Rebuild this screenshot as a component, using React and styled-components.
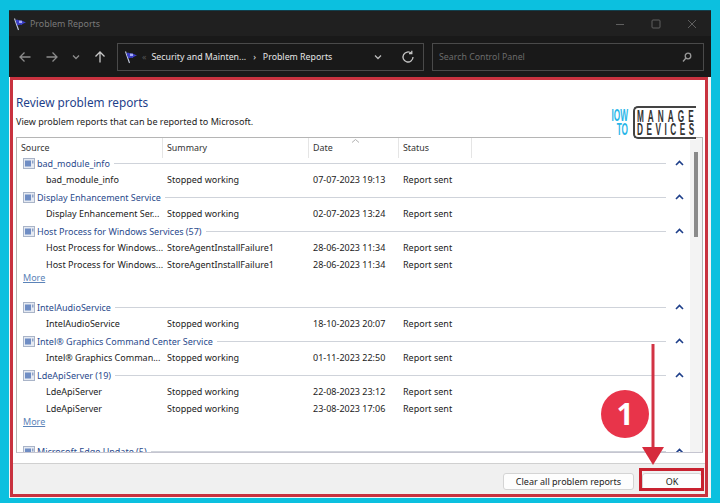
import React from 'react';
import styled, { createGlobalStyle } from 'styled-components';

const GlobalStyle = createGlobalStyle`
  html, body {
    margin: 0;
    height: 503px;
    overflow: hidden;
    background: #0cc0df;
    font-family: "Noto Sans", "Open Sans", sans-serif;
  }
`;

const Page = styled.div`
  position: relative;
  width: 720px;
  height: 503px;
  padding: 10px 0 0 9px;
  box-sizing: border-box;
`;
const Window = styled.div`
  width: 702px;
  height: 488px;
  background: #f4f4f4;
  display: flex;
  flex-direction: column;
  box-sizing: border-box;
`;
const TitleBar = styled.div`
  height: 26px;
  flex: none;
  background: #202020;
  border-top: 1px solid #123f4c;
  box-sizing: border-box;
  display: flex;
  align-items: center;
  padding-left: 4px;
  gap: 3px;
  color: #7a7a7a;
  font-size: 8.9px;
`;
const WindowButtons = styled.div`
  margin-left: auto;
  display: flex;
  align-items: center;
  gap: 22px;
  padding-right: 12px;
  svg { display: block; }
`;
const NavBar = styled.div`
  height: 41px;
  flex: none;
  background: #191919;
  display: flex;
  align-items: center;
  box-sizing: border-box;
  padding: 0 0 0 8px;
`;
const NavIcons = styled.div`
  width: 100px;
  flex: none;
  display: flex;
  align-items: center;
  gap: 11px;
  svg { display: block; }
`;
const AddressBox = styled.div`
  width: 307px;
  height: 28px;
  flex: none;
  box-sizing: border-box;
  border: 1px solid #4a4a4a;
  display: flex;
  align-items: center;
  padding: 0 7px 0 6px;
  color: #e6e6e6;
  font-size: 8.8px;
  white-space: nowrap;
  svg { display: block; flex: none; }
`;
const Crumb = styled.span`
  margin: ${(p) => p.$margin};
  color: ${(p) => p.$color || 'inherit'};
`;
const SearchBox = styled.div`
  width: 272px;
  height: 28px;
  margin-left: 8px;
  flex: none;
  box-sizing: border-box;
  border: 1px solid #4a4a4a;
  display: flex;
  align-items: center;
  justify-content: space-between;
  padding: 0 10px 0 6px;
  color: #6b6b6b;
  font-size: 8.8px;
`;
const Content = styled.div`
  flex: 1;
  min-height: 0;
  margin: 0 3px 1px 1px;
  border: 3px solid #c8323f;
  display: flex;
  flex-direction: column;
  background: #fff;
`;
const Main = styled.div`
  flex: 1;
  min-height: 0;
  display: flex;
  flex-direction: column;
  padding: 14px 2px 10px 3px;
`;
const Heading = styled.h1`
  margin: 0;
  font-size: 11.8px;
  line-height: 16px;
  font-weight: 400;
  color: #1e3f8a;
`;
const Subheading = styled.p`
  margin: 6px 0 9px;
  font-size: 9.05px;
  line-height: 12px;
  color: #222;
`;
const ListBox = styled.div`
  flex: 1;
  min-height: 0;
  border: 1px solid #b5b5b5;
  border-bottom-color: #c5c5d0;
  display: flex;
  overflow: hidden;
`;
const ListBody = styled.div`
  flex: 1;
  min-width: 0;
  overflow: hidden;
`;
const ListHeader = styled.div`
  display: grid;
  grid-template-columns: 146px 146px 90px 73px 1fr;
  height: 17px;
`;
const HeaderCell = styled.div`
  position: relative;
  font-size: 8.9px;
  line-height: 20px;
  color: #333;
  padding-left: ${(p) => p.$pad || 4}px;
  border-right: 1px solid #e5e5e5;
  &:last-child { border-right: 0; }
`;
const SortCaret = styled.svg`
  position: absolute;
  left: 42px;
  top: 1px;
`;
const Group = styled.div`
  padding-bottom: 1px;
`;
const GroupRow = styled.div`
  height: 16px;
  display: flex;
  align-items: center;
  padding: 0 6px 0 6px;
  gap: 2px;
`;
const GroupName = styled.span`
  color: #2a4a8c;
  font-size: 9px;
  white-space: nowrap;
`;
const GroupLine = styled.span`
  flex: 1;
  height: 1px;
  background: #cfd3da;
  margin-left: 2px;
`;
const Chevron = styled.svg`
  flex: none;
  margin-left: 7px;
`;
const ItemRow = styled.div`
  display: grid;
  grid-template-columns: 146px 146px 90px 1fr;
  height: ${(p) => p.$h}px;
  align-items: center;
  font-size: 9px;
  color: #222;
`;
const ItemCell = styled.span`
  padding-left: ${(p) => p.$pad || 4}px;
  white-space: nowrap;
  overflow: hidden;
`;
const MoreLink = styled.a`
  display: block;
  height: ${(p) => p.$h}px;
  padding-left: 6px;
  font-size: 9px;
  line-height: 12px;
  color: #5b83b8;
  text-decoration: underline;
`;
const Scrollbar = styled.div`
  width: 12px;
  flex: none;
  background: #f3f3f3;
  position: relative;
`;
const Thumb = styled.div`
  position: absolute;
  left: 4px;
  top: 14px;
  width: 4px;
  height: 85px;
  background: #8a8a8a;
`;
const Footer = styled.div`
  height: 31px;
  flex: none;
  background: #f0f0f0;
  border-top: 1px solid #d0d0d0;
  box-sizing: border-box;
  display: flex;
  justify-content: flex-end;
  align-items: center;
  gap: 8px;
  padding: 4px 3px 0 0;
`;
const Button = styled.div`
  width: ${(p) => p.$w}px;
  height: 17px;
  box-sizing: border-box;
  background: #fdfdfd;
  border: 1px solid #d4d4d4;
  border-radius: 3px;
  font-size: 9px;
  line-height: 15px;
  text-align: center;
  color: #222;
`;
const OkHighlight = styled.div`
  position: absolute;
  left: 639px;
  top: 468px;
  width: 65px;
  height: 23px;
  box-sizing: border-box;
  border: 3px solid #c8212f;
`;
const Badge = styled.div`
  position: absolute;
  left: 601px;
  top: 390px;
  width: 48px;
  height: 48px;
  border-radius: 50%;
  background: #e8344a;
  color: #fff;
  font-size: 30px;
  font-weight: 700;
  line-height: 48px;
  text-align: center;
  font-family: "Open Sans", sans-serif;
`;
const ArrowOverlay = styled.svg`
  position: absolute;
  left: 642px;
  top: 340px;
`;
const Logo = styled.div`
  position: absolute;
  left: 611px;
  top: 104px;
  width: 85px;
  height: 36px;
  background: #fff;
  display: flex;
  align-items: center;
  font-family: "Liberation Sans", sans-serif;
  font-weight: 700;
`;
const LogoHow = styled.div`
  width: 36px;
  margin-left: -19px;
  flex: none;
  color: #29b6e8;
  font-size: 16.5px;
  line-height: 14px;
  text-align: right;
  white-space: nowrap;
  transform: scaleX(0.5);
  transform-origin: right center;
`;
const LogoBox = styled.div`
  margin-left: 5px;
  flex: 1;
  min-width: 0;
  height: 33px;
  box-sizing: border-box;
  border: 2px solid #444;
  border-right: 0;
  border-radius: 5px 0 0 5px;
  padding: 2px 0 0 2px;
  color: #333;
  font-size: 16.5px;
  line-height: 13.5px;
  white-space: nowrap;
`;
const LogoWord = styled.div`
  width: 116px;
  letter-spacing: ${(p) => p.$spacing}px;
  transform: scaleX(0.5);
  transform-origin: left center;
`;

const Flag = ({ size = 14 }) => (
  <svg width={size} height={size} viewBox="0 0 14 14">
    <path d="M1.5 1.5 L5.5 13" stroke="#c4cce0" strokeWidth="1.1" />
    <path d="M2.5 3 C5 2 6 4 8.5 3.4 L13 5.6 C11 6.6 9.8 6.4 8.6 8 C7 7.4 5.5 7.8 4.4 8.6 Z" fill="#3c3fc8" />
    <path d="M6 3.4 L9 3.8 L9 6 L6 6 Z" fill="#a6acf8" />
  </svg>
);

const Stroke = ({ w = 16, h = 16, children, color = '#b5b5b5', sw = 1.3 }) => (
  <svg width={w} height={h} viewBox={`0 0 ${w} ${h}`} fill="none" stroke={color} strokeWidth={sw}>
    {children}
  </svg>
);

const AppIcon = () => (
  <svg width="12" height="11" viewBox="0 0 12 11" style={{ flex: 'none' }}>
    <rect x="0.5" y="0.5" width="11" height="10" fill="#e6eaf2" stroke="#a9b4c8" />
    <rect x="2" y="2.5" width="6" height="6" fill="#6f8dc4" />
    <rect x="9" y="2.5" width="1.5" height="3" fill="#8fa3c8" />
  </svg>
);

const groups = [
  { name: 'bad_module_info', items: [['bad_module_info', 'Stopped working', '07-07-2023 19:13']] },
  { name: 'Display Enhancement Service', items: [['Display Enhancement Ser...', 'Stopped working', '02-07-2023 13:24']] },
  {
    name: 'Host Process for Windows Services (57)',
    items: [
      ['Host Process for Windows...', 'StoreAgentInstallFailure1', '28-06-2023 11:34'],
      ['Host Process for Windows...', 'StoreAgentInstallFailure1', '28-06-2023 11:34'],
    ],
    more: 26,
  },
  { name: 'IntelAudioService', items: [['IntelAudioService', 'Stopped working', '18-10-2023 20:07']] },
  { name: 'Intel® Graphics Command Center Service', items: [['Intel® Graphics Comman...', 'Stopped working', '01-11-2023 22:50']] },
  {
    name: 'LdeApiServer (19)',
    items: [
      ['LdeApiServer', 'Stopped working', '22-08-2023 23:12'],
      ['LdeApiServer', 'Stopped working', '23-08-2023 17:06'],
    ],
    more: 26,
  },
  { name: 'Microsoft Edge Update (5)', items: [] },
];

const App = () => (
  <>
    <GlobalStyle />
    <Page>
      <Window>
        <TitleBar>
          <Flag />
          <span>Problem Reports</span>
          <WindowButtons>
            <Stroke w={14} h={14} color="#5f5f5f" sw={1}><path d="M3 7.5h8" /></Stroke>
            <Stroke w={14} h={14} color="#5f5f5f" sw={1}><rect x="3" y="3" width="8" height="8" rx="1" /></Stroke>
            <Stroke w={14} h={14} color="#5f5f5f" sw={1}><path d="M3 3l8 8M11 3l-8 8" /></Stroke>
          </WindowButtons>
        </TitleBar>
        <NavBar>
          <NavIcons>
            <Stroke color="#8c8c8c"><path d="M13.5 8H3M7.5 3.5L3 8l4.5 4.5" /></Stroke>
            <Stroke color="#8c8c8c"><path d="M2.5 8H13M8.5 3.5L13 8l-4.5 4.5" /></Stroke>
            <Stroke w={10} color="#8c8c8c"><path d="M2 6.5l3 3 3-3" /></Stroke>
            <Stroke color="#c8c8c8"><path d="M8 13.5V3M3.5 7.5L8 3l4.5 4.5" /></Stroke>
          </NavIcons>
          <AddressBox>
            <Flag />
            <Crumb $margin="0 5px 0 4px" $color="#555">«</Crumb>
            <span>Security and Mainten...</span>
            <Crumb $margin="0 7px">›</Crumb>
            <span>Problem Reports</span>
            <Crumb $margin="0 0 0 auto"><Stroke w={12} h={12} color="#bbb"><path d="M3 4.5l3 3 3-3" /></Stroke></Crumb>
            <Crumb $margin="0 0 0 16px"><Stroke color="#c4c4c4"><path d="M13 8a5 5 0 1 1-1.6-3.7M11.8 1.8v2.8H9" /></Stroke></Crumb>
          </AddressBox>
          <SearchBox>
            <span>Search Control Panel</span>
            <Stroke w={12} h={12} color="#999"><circle cx="7" cy="5" r="2.8" /><path d="M5 7L2 10.5" /></Stroke>
          </SearchBox>
        </NavBar>
        <Content>
          <Main>
            <Heading>Review problem reports</Heading>
            <Subheading>View problem reports that can be reported to Microsoft.</Subheading>
            <ListBox>
              <ListBody>
                <ListHeader>
                  <HeaderCell>Source</HeaderCell>
                  <HeaderCell>Summary</HeaderCell>
                  <HeaderCell>
                    Date
                    <SortCaret width="9" height="4" viewBox="0 0 9 4" fill="none" stroke="#b0b0b0" strokeWidth="1">
                      <path d="M1 3.5L4.5 .5L8 3.5" />
                    </SortCaret>
                  </HeaderCell>
                  <HeaderCell>Status</HeaderCell>
                  <HeaderCell />
                </ListHeader>
                {groups.map((group) => (
                  <Group key={group.name}>
                    <GroupRow>
                      <AppIcon />
                      <GroupName>{group.name}</GroupName>
                      <GroupLine />
                      <Chevron width="9" height="6" viewBox="0 0 9 6" fill="none" stroke="#1e3f8a" strokeWidth="1.6">
                        <path d="M1 5l3.5-3.5L8 5" />
                      </Chevron>
                    </GroupRow>
                    {group.items.map((item, i) => (
                      <ItemRow key={i} $h={i === 0 ? 17 : 16}>
                        <ItemCell $pad={29}>{item[0]}</ItemCell>
                        <ItemCell>{item[1]}</ItemCell>
                        <ItemCell>{item[2]}</ItemCell>
                        <ItemCell>Report sent</ItemCell>
                      </ItemRow>
                    ))}
                    {group.more && <MoreLink $h={group.more}>More</MoreLink>}
                  </Group>
                ))}
              </ListBody>
              <Scrollbar><Thumb /></Scrollbar>
            </ListBox>
          </Main>
          <Footer>
            <Button $w={131}>Clear all problem reports</Button>
            <Button $w={60}>OK</Button>
          </Footer>
        </Content>
      </Window>
      <Logo>
        <LogoHow>IOW<br />TO</LogoHow>
        <LogoBox>
          <LogoWord $spacing={8}>MANAGE</LogoWord>
          <LogoWord $spacing={7}>DEVICES</LogoWord>
        </LogoBox>
      </Logo>
      <OkHighlight />
      <Badge>1</Badge>
      <ArrowOverlay width="22" height="126" viewBox="0 0 22 126">
        <path d="M11 4V108" stroke="#d23344" strokeWidth="3" />
        <path d="M0 107H22L11 125Z" fill="#d62b3d" />
      </ArrowOverlay>
    </Page>
  </>
);

export default App;
